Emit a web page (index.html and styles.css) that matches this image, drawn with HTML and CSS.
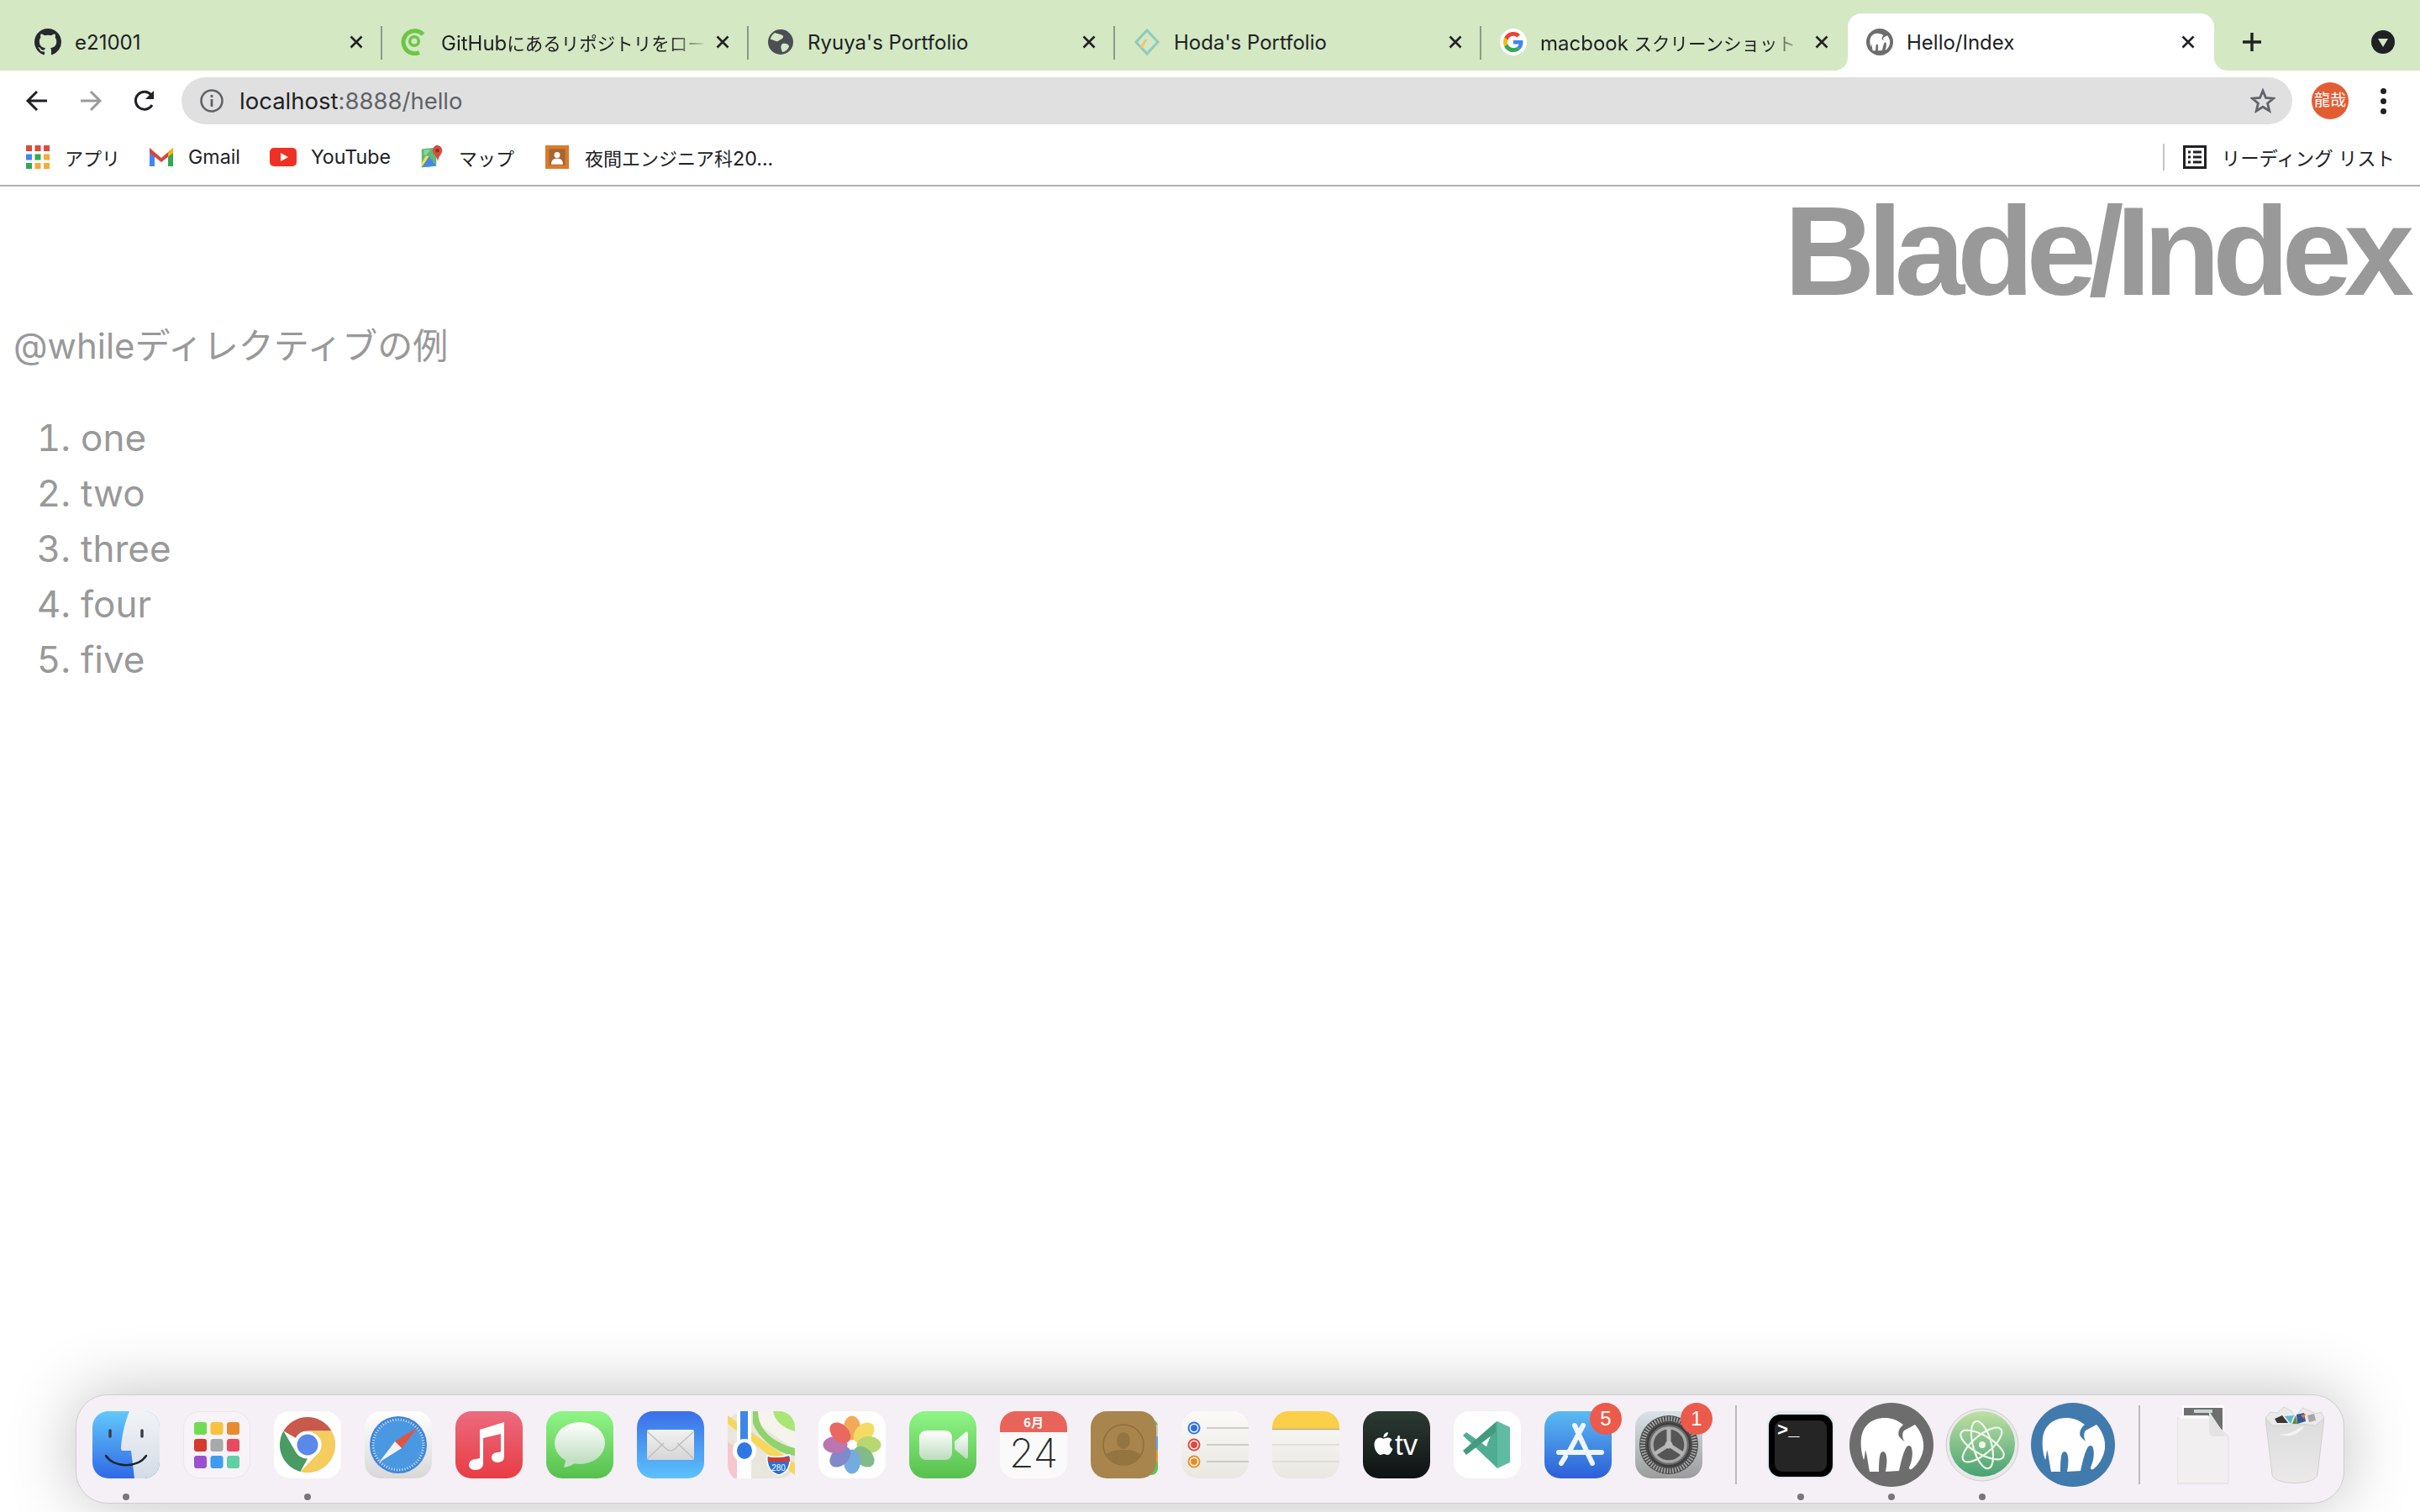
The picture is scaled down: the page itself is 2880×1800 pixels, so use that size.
FILE: index.html
```html
<!DOCTYPE html>
<html lang="ja">

<head>
    <meta charset="UTF-8">
    <title>Hello/Index</title>
    <link rel="stylesheet" href="styles.css">
</head>

<body>
    <!-- shared gradients and symbols -->
    <svg class="defs" aria-hidden="true">
        <defs>
            <linearGradient id="gFinder" x1="0" y1="0" x2="0" y2="1"><stop offset="0" stop-color="#62c8fb"/><stop offset="1" stop-color="#2f69e6"/></linearGradient>
            <linearGradient id="gFinder2" x1="0" y1="0" x2="0" y2="1"><stop offset="0" stop-color="#f3f3f5"/><stop offset="1" stop-color="#d2dce8"/></linearGradient>
            <linearGradient id="gSafari" x1="0" y1="0" x2="0" y2="1"><stop offset="0" stop-color="#fff"/><stop offset="1" stop-color="#d8d8d8"/></linearGradient>
            <linearGradient id="gMusic" x1="0" y1="0" x2="0" y2="1"><stop offset="0" stop-color="#ec6b7e"/><stop offset="1" stop-color="#e83c44"/></linearGradient>
            <linearGradient id="gGreen" x1="0" y1="0" x2="0" y2="1"><stop offset="0" stop-color="#8ff587"/><stop offset="1" stop-color="#57c04d"/></linearGradient>
            <linearGradient id="gBubble" x1="0" y1="0" x2="0" y2="1"><stop offset="0" stop-color="#fff"/><stop offset="1" stop-color="#bcdcbc"/></linearGradient>
            <linearGradient id="gMail" x1="0" y1="0" x2="0" y2="1"><stop offset="0" stop-color="#3a6fe8"/><stop offset="1" stop-color="#5cc2fb"/></linearGradient>
            <linearGradient id="gEnvelope" x1="0" y1="0" x2="0" y2="1"><stop offset="0" stop-color="#f2f2f2"/><stop offset="1" stop-color="#d6d6d6"/></linearGradient>
            <linearGradient id="gNotes" x1="0" y1="0" x2="0" y2="1"><stop offset="0" stop-color="#fbfaf7"/><stop offset="1" stop-color="#e9e7e2"/></linearGradient>
            <linearGradient id="gTv" x1="0" y1="0" x2="0" y2="1"><stop offset="0" stop-color="#2c3b34"/><stop offset="1" stop-color="#0e1212"/></linearGradient>
            <linearGradient id="gStore" x1="0" y1="0" x2="0" y2="1"><stop offset="0" stop-color="#5abbf3"/><stop offset="1" stop-color="#2c5fd8"/></linearGradient>
            <linearGradient id="gGear" x1="0" y1="0" x2="0" y2="1"><stop offset="0" stop-color="#d9e3e8"/><stop offset="1" stop-color="#9c9c9c"/></linearGradient>
            <linearGradient id="gAtom" x1="0" y1="0" x2="0" y2="1"><stop offset="0" stop-color="#bfe0a4"/><stop offset="1" stop-color="#47a272"/></linearGradient>
            <linearGradient id="gBin" x1="0" y1="0" x2="0" y2="1"><stop offset="0" stop-color="#dcdcdc"/><stop offset="1" stop-color="#ebe9ea"/></linearGradient>
            <symbol id="elephant" viewBox="0 0 100 100">
                <path d="M14 42C16 26 28 18 42 18C50 18 56 20 64 26C59 30 57 36 59 40C62 44 65 45 66 47C63 43 62 37 65 33L78 26C85 34 89 44 88 54C87 64 81 74 74 79C72 80 71 79 71 77C74 70 76 62 74 54C73 50 69 50 67 54C63 62 61 72 59 81L43 82C44 76 45 70 44 64C43 56 37 56 36 64C35 70 35 76 35 82L24 82C22 72 21 62 19 56C18 64 18 66 17 68C14 60 13 50 14 42Z"/>
            </symbol>
            <symbol id="close" viewBox="0 0 16 16">
                <path d="M1.5 1.5L14.5 14.5M14.5 1.5L1.5 14.5" fill="none" stroke="#202124" stroke-width="2.6"/>
            </symbol>
        </defs>
    </svg>

    <div class="page">
        <header class="browser">
            <div class="tabstrip">
                <div class="tab">
                    <svg class="favicon" viewBox="0 0 16 16"><path fill="#24292e" d="M8 0C3.58 0 0 3.58 0 8c0 3.54 2.29 6.53 5.47 7.59.4.07.55-.17.55-.38 0-.19-.01-.82-.01-1.49-2.01.37-2.53-.49-2.69-.94-.09-.23-.48-.94-.82-1.13-.28-.15-.68-.52-.01-.53.63-.01 1.08.58 1.23.82.72 1.21 1.87.87 2.33.66.07-.52.28-.87.51-1.07-1.78-.2-3.64-.89-3.64-3.95 0-.87.31-1.59.82-2.15-.08-.2-.36-1.02.08-2.12 0 0 .67-.21 2.2.82.64-.18 1.32-.27 2-.27.68 0 1.36.09 2 .27 1.53-1.04 2.2-.82 2.2-.82.44 1.1.16 1.92.08 2.12.51.56.82 1.27.82 2.15 0 3.07-1.87 3.75-3.65 3.95.29.25.54.73.54 1.48 0 1.07-.01 1.93-.01 2.2 0 .21.15.46.55.38A8.013 8.013 0 0016 8c0-4.42-3.58-8-8-8z"/></svg>
                    <span class="tab-title">e21001</span>
                    <svg class="tab-close"><use href="#close"/></svg>
                </div>
                <div class="tab">
                    <svg class="favicon" viewBox="0 0 32 32"><path d="M22 28.5A13.5 13.5 0 1 1 26.5 7" fill="none" stroke="#6cc644" stroke-width="5"/><circle cx="16" cy="15" r="7" fill="#6cc644"/><circle cx="16" cy="15" r="3.5" fill="#d3e8c3"/></svg>
                    <span class="tab-title faded">GitHub<span class="ja">にあるリポジトリをロー</span></span>
                    <svg class="tab-close"><use href="#close"/></svg>
                </div>
                <div class="tab">
                    <svg class="favicon" viewBox="0 0 32 32"><circle cx="16" cy="16" r="15" fill="#4a4f54"/><path d="M9 5C13 7 17 6 19 9C20 12 15 13 13 15C10 16 7 13 4 13C4 10 6 7 9 5ZM18 18C22 17 26 19 26 21C25 25 21 28 18 28C17 25 15 21 18 18Z" fill="#d3e8c3"/></svg>
                    <span class="tab-title">Ryuya's Portfolio</span>
                    <svg class="tab-close"><use href="#close"/></svg>
                </div>
                <div class="tab">
                    <svg class="favicon" viewBox="0 0 32 32"><path d="M16 2L29 16L16 30L3 16Z" fill="none" stroke="#8ecbbd" stroke-width="3"/><path d="M9 23L15 13" stroke="#f2c27a" stroke-width="3"/></svg>
                    <span class="tab-title">Hoda's Portfolio</span>
                    <svg class="tab-close"><use href="#close"/></svg>
                </div>
                <div class="tab">
                    <svg class="favicon" viewBox="0 0 64 64">
                        <circle cx="32" cy="32" r="32" fill="#fff"/>
                        <g transform="translate(8 8)">
                            <path fill="#EA4335" d="M24 9.5c3.54 0 6.71 1.22 9.21 3.6l6.85-6.85C35.9 2.38 30.47 0 24 0 14.62 0 6.51 5.38 2.56 13.22l7.98 6.19C12.43 13.72 17.74 9.5 24 9.5z"/>
                            <path fill="#4285F4" d="M46.98 24.55c0-1.57-.15-3.09-.38-4.55H24v9.02h12.94c-.58 2.96-2.26 5.48-4.78 7.18l7.73 6c4.51-4.18 7.09-10.36 7.09-17.65z"/>
                            <path fill="#FBBC05" d="M10.53 28.59c-.48-1.45-.76-2.99-.76-4.59s.27-3.14.76-4.59l-7.98-6.19C.92 16.46 0 20.12 0 24c0 3.88.92 7.54 2.56 10.78l7.97-6.19z"/>
                            <path fill="#34A853" d="M24 48c6.48 0 11.93-2.13 15.89-5.81l-7.73-6c-2.15 1.45-4.92 2.3-8.16 2.3-6.26 0-11.57-4.22-13.47-9.91l-7.98 6.19C6.51 42.62 14.62 48 24 48z"/>
                        </g>
                    </svg>
                    <span class="tab-title faded">macbook <span class="ja">スクリーンショット</span></span>
                    <svg class="tab-close"><use href="#close"/></svg>
                </div>
                <div class="tab active">
                    <svg class="favicon" viewBox="0 0 100 100"><circle cx="50" cy="50" r="50" fill="#6d6d6d"/><use href="#elephant" fill="#fff"/></svg>
                    <span class="tab-title">Hello/Index</span>
                    <svg class="tab-close"><use href="#close"/></svg>
                </div>
                <svg class="new-tab" viewBox="0 0 24 24"><path d="M12 1V23M1 12H23" stroke="#202124" stroke-width="3.4" fill="none"/></svg>
                <div class="tab-search">
                    <svg viewBox="0 0 28 28"><circle cx="14" cy="14" r="14" fill="#202124"/><path d="M8 10H20L14 20Z" fill="#d3e8c3"/></svg>
                </div>
            </div>

            <div class="toolbar">
                <svg class="nav-btn" viewBox="0 0 28 28"><path d="M26 14H4M14 3L3 14L14 25" fill="none" stroke="#202124" stroke-width="3"/></svg>
                <svg class="nav-btn" viewBox="0 0 28 28"><path d="M2 14H24M14 3L25 14L14 25" fill="none" stroke="#9a9a9a" stroke-width="3"/></svg>
                <svg class="nav-btn" viewBox="0 0 28 28"><path d="M23 19A10.5 10.5 0 1 1 22 7" fill="none" stroke="#202124" stroke-width="3"/><path d="M25 2V12H15Z" fill="#202124"/></svg>
                <div class="omnibox">
                    <svg class="info" viewBox="0 0 28 28"><circle cx="14" cy="14" r="12.5" fill="none" stroke="#5f6368" stroke-width="2.6"/><path d="M14 12V21M14 7V10" stroke="#5f6368" stroke-width="2.8"/></svg>
                    <span class="url"><span class="host">localhost</span>:8888/hello</span>
                    <svg class="star" viewBox="0 0 30 30"><path d="M15 3L18.5 11.5L27.5 12.2L20.6 18L22.8 27L15 22.2L7.2 27L9.4 18L2.5 12.2L11.5 11.5Z" fill="none" stroke="#5f6368" stroke-width="2.8"/></svg>
                </div>
                <div class="avatar">龍哉</div>
                <div class="menu"><i></i><i></i><i></i></div>
            </div>

            <div class="bookmarks">
                <div class="bookmark apps">
                    <svg class="bm-icon" viewBox="0 0 28 28">
                        <g fill="#dd4b39"><rect width="7" height="7"/><rect x="10.500" width="7" height="7"/><rect x="21" width="7" height="7"/></g>
                        <g><rect y="10.500" width="7" height="7" fill="#4285f4"/><rect x="10.500" y="10.500" width="7" height="7" fill="#34a853"/><rect x="21" y="10.500" width="7" height="7" fill="#f4a93c"/></g>
                        <g><rect y="21" width="7" height="7" fill="#34a853"/><rect x="10.500" y="21" width="7" height="7" fill="#f4a93c"/><rect x="21" y="21" width="7" height="7" fill="#f4a93c"/></g>
                    </svg>
                    <span class="ja">アプリ</span>
                </div>
                <div class="bookmark gmail">
                    <svg class="bm-icon" viewBox="0 0 28 28"><path d="M0 5V25H6V12Z" fill="#4285f4"/><path d="M28 5V25H22V12Z" fill="#34a853"/><path d="M0 3L14 15L28 3V9L14 20L0 9Z" fill="#d9453a"/><path d="M22 9L28 3V9L22 14Z" fill="#f6b704"/></svg>
                    <span>Gmail</span>
                </div>
                <div class="bookmark youtube">
                    <svg class="bm-icon wide" viewBox="0 0 32 28"><rect y="3" width="32" height="22" rx="5" fill="#ee3124"/><path d="M13 9L22 14L13 19Z" fill="#fff"/></svg>
                    <span>YouTube</span>
                </div>
                <div class="bookmark maps">
                    <svg class="bm-icon" viewBox="0 0 28 32"><path d="M0 5L20 3V28L0 30Z" fill="#5fb878"/><path d="M0 30L10 15L20 28Z" fill="#4a86e8"/><path d="M0 30L10 15L6 14L0 24Z" fill="#f4e04d"/><path d="M3 6H12L6 13H3Z" fill="#8fd0a5"/><path d="M21 0C25 0 28 3 28 7C28 12 23 14 22 22C21 14 15 12 15 7C15 3 18 0 21 0Z" fill="#d64b3f"/><circle cx="21.500" cy="7" r="2.500" fill="#8c2f26"/></svg>
                    <span class="ja">マップ</span>
                </div>
                <div class="bookmark night">
                    <svg class="bm-icon wide" viewBox="0 0 32 32"><rect width="32" height="32" fill="#d97b30"/><rect x="5" y="5" width="22" height="22" fill="#a9652e"/><circle cx="16" cy="13" r="4" fill="#fff"/><path d="M8 26C8 20 11 18 16 18C21 18 24 20 24 26Z" fill="#fff"/></svg>
                    <span><span class="ja">夜間エンジニア科</span>20...</span>
                </div>
                <div class="reading">
                    <svg class="bm-icon" viewBox="0 0 28 28"><rect x="1.500" y="1.500" width="25" height="25" fill="none" stroke="#202124" stroke-width="3"/><path d="M6 8H9M12 8H22M6 14H9M12 14H22M6 20H9M12 20H22" stroke="#202124" stroke-width="3"/></svg>
                    <span class="ja">リーディング リスト</span>
                </div>
            </div>
        </header>

        <main class="content">
            <h1>Blade/Index</h1>
            <h3>@whileディレクティブの例</h3>
            <ol>
                <li>one</li>
                <li>two</li>
                <li>three</li>
                <li>four</li>
                <li>five</li>
            </ol>
        </main>

        <footer class="dock">
            <!-- Finder -->
            <div class="app running">
                <svg class="icon" viewBox="0 0 80 80">
                    <rect width="80" height="80" rx="19" fill="url(#gFinder)"/>
                    <path d="M44 0H61A19 19 0 0 1 80 19V61A19 19 0 0 1 61 80H50L46 47H36C34 47 34 45 34 43C35 28 39 12 44 0Z" fill="url(#gFinder2)"/>
                    <path d="M21 23V30M59 23V30" stroke="#3a3f4a" stroke-width="3.500" stroke-linecap="round"/>
                    <path d="M16 53C26 68 54 68 64 53" fill="none" stroke="#20242c" stroke-width="2.500" stroke-linecap="round"/>
                </svg>
            </div>
            <!-- Launchpad -->
            <div class="app">
                <svg class="icon" viewBox="0 0 80 80">
                    <rect x=".5" y=".5" width="79" height="79" rx="19" fill="#f7f3f6" stroke="#ebe6ea"/>
                    <rect x="13" y="13" width="15" height="15" rx="3" fill="#6fdc52"/><rect x="32.500" y="13" width="15" height="15" rx="3" fill="#f7c33e"/><rect x="52" y="13" width="15" height="15" rx="3" fill="#e88b30"/>
                    <rect x="13" y="33" width="15" height="15" rx="3" fill="#d53a2d"/><rect x="32.500" y="33" width="15" height="15" rx="3" fill="#a6aaad"/><rect x="52" y="33" width="15" height="15" rx="3" fill="#e94a60"/>
                    <rect x="13" y="53" width="15" height="15" rx="3" fill="#9b50d2"/><rect x="32.500" y="53" width="15" height="15" rx="3" fill="#3f9bf2"/><rect x="52" y="53" width="15" height="15" rx="3" fill="#60cfa6"/>
                </svg>
            </div>
            <!-- Chrome -->
            <div class="app running">
                <svg class="icon" viewBox="0 0 80 80">
                    <rect width="80" height="80" rx="19" fill="#fff"/>
                    <path d="M40 7A33 33 0 0 1 68.600 23.500H40A16.500 16.500 0 0 0 25.700 31.700L11.400 23.500A33 33 0 0 1 40 7Z" fill="#c9594b"/>
                    <path d="M11.400 23.500L25.700 48.300A16.500 16.500 0 0 0 40 56.500L31.500 72A33 33 0 0 1 11.400 23.500Z" fill="#4a9a63"/>
                    <path d="M68.600 23.500A33 33 0 0 1 31.500 72L54.300 48.300A16.500 16.500 0 0 0 54.300 31.700L40 23.500Z" fill="#f5cd5f"/>
                    <circle cx="40" cy="40" r="16" fill="#fff"/>
                    <circle cx="40" cy="40" r="12.500" fill="#5b89e9"/>
                </svg>
            </div>
            <!-- Safari -->
            <div class="app">
                <svg class="icon" viewBox="0 0 80 80">
                    <rect width="80" height="80" rx="19" fill="url(#gSafari)"/>
                    <circle cx="40" cy="40" r="34" fill="#3f86d8"/>
                    <circle cx="40" cy="40" r="30" fill="#4a97e2" stroke="#dcebf8" stroke-width="3" stroke-dasharray="1 2.200"/>
                    <path d="M63 19L36 36L44 44Z" fill="#e5533f"/>
                    <path d="M17 61L36 36L44 44Z" fill="#f2f2f2"/>
                </svg>
            </div>
            <!-- Music -->
            <div class="app">
                <svg class="icon" viewBox="0 0 80 80">
                    <rect width="80" height="80" rx="19" fill="url(#gMusic)"/>
                    <path d="M29 22L58 13V54C58 59 54 61 50 61C46 61 43 58 43 55C43 51 47 49 51 49L54 48V27L33 32V63C33 67 29 70 24 70C19 70 16 67 16 64C16 60 20 57 24 57L29 56Z" fill="#fff"/>
                </svg>
            </div>
            <!-- Messages -->
            <div class="app">
                <svg class="icon" viewBox="0 0 80 80">
                    <rect width="80" height="80" rx="19" fill="url(#gGreen)"/>
                    <ellipse cx="40" cy="38" rx="30" ry="25" fill="url(#gBubble)"/>
                    <path d="M24 56L21 67C27 66 32 64 35 61Z" fill="#c4e0c2"/>
                </svg>
            </div>
            <!-- Mail -->
            <div class="app">
                <svg class="icon" viewBox="0 0 80 80">
                    <rect width="80" height="80" rx="19" fill="url(#gMail)"/>
                    <rect x="12" y="22" width="56" height="36" rx="2" fill="url(#gEnvelope)"/>
                    <path d="M12 24L34 44C38 48 42 48 46 44L68 24M12 57L32 38M68 57L48 38" fill="none" stroke="#bdbdbd" stroke-width="1.200"/>
                </svg>
            </div>
            <!-- Maps -->
            <div class="app">
                <svg class="icon" viewBox="0 0 80 80">
                    <rect width="80" height="80" rx="19" fill="#e9e6dc"/>
                    <path d="M36 0H61A19 19 0 0 1 80 19V46L40 18C38 12 36 6 36 0Z" fill="#f5f3ec"/>
                    <path d="M54 0H61A19 19 0 0 1 80 19V24C66 20 56 12 54 0Z" fill="#a9e676"/>
                    <path d="M30 0H36C36 20 50 36 80 44V53C56 50 36 30 30 14Z" fill="#8fd36b"/>
                    <path d="M0 15L80 76V62L0 5Z" fill="#f6d75c"/>
                    <path d="M0 36L11 44V80H8C3 77 0 70 0 61Z" fill="#f6c6cf"/>
                    <rect x="11" y="30" width="17" height="50" fill="#fff"/>
                    <rect x="15" y="0" width="9" height="36" fill="#3b86e8"/>
                    <rect x="11" y="0" width="4" height="36" fill="#fff"/>
                    <rect x="24" y="0" width="4" height="36" fill="#fff"/>
                    <circle cx="20" cy="47" r="14" fill="#fff"/>
                    <ellipse cx="20" cy="47" rx="9" ry="10" fill="#2f78e4"/>
                    <path d="M47 53C54 55 64 55 74 52C75 62 73 73 61 76C49 73 46 62 47 53Z" fill="#2a6fd6" stroke="#fff" stroke-width="1.500"/>
                    <rect x="48" y="55" width="26" height="5" fill="#d8392e"/>
                    <text class="shield-text" x="60.500" y="71">280</text>
                </svg>
            </div>
            <!-- Photos -->
            <div class="app">
                <svg class="icon" viewBox="0 0 80 80">
                    <rect width="80" height="80" rx="19" fill="#fff"/>
                    <g opacity=".78">
                        <ellipse cx="40" cy="20" rx="10" ry="14.500" fill="#f0912c"/>
                        <ellipse cx="40" cy="20" rx="10" ry="14.500" fill="#f2d23c" transform="rotate(45 40 40)"/>
                        <ellipse cx="40" cy="20" rx="10" ry="14.500" fill="#a6cc4a" transform="rotate(90 40 40)"/>
                        <ellipse cx="40" cy="20" rx="10" ry="14.500" fill="#5fa868" transform="rotate(135 40 40)"/>
                        <ellipse cx="40" cy="20" rx="10" ry="14.500" fill="#4f95d8" transform="rotate(180 40 40)"/>
                        <ellipse cx="40" cy="20" rx="10" ry="14.500" fill="#5d68bb" transform="rotate(225 40 40)"/>
                        <ellipse cx="40" cy="20" rx="10" ry="14.500" fill="#a8509c" transform="rotate(270 40 40)"/>
                        <ellipse cx="40" cy="20" rx="10" ry="14.500" fill="#e33f34" transform="rotate(315 40 40)"/>
                    </g>
                </svg>
            </div>
            <!-- FaceTime -->
            <div class="app">
                <svg class="icon" viewBox="0 0 80 80">
                    <rect width="80" height="80" rx="19" fill="url(#gGreen)"/>
                    <rect x="12" y="23" width="39" height="35" rx="8" fill="url(#gBubble)"/>
                    <path d="M54 36L67 25C69 24 70 25 70 27V54C70 56 69 57 67 56L54 45Z" fill="url(#gBubble)"/>
                </svg>
            </div>
            <!-- Calendar -->
            <div class="app">
                <svg class="icon" viewBox="0 0 80 80">
                    <rect width="80" height="80" rx="19" fill="#fafafa"/>
                    <path d="M0 25V19A19 19 0 0 1 19 0H61A19 19 0 0 1 80 19V25Z" fill="#e8645b"/>
                    <text class="cal-month" x="40" y="19">6月</text>
                    <text class="cal-day" x="40" y="67">24</text>
                </svg>
            </div>
            <!-- Contacts -->
            <div class="app">
                <svg class="icon" viewBox="0 0 80 80">
                    <rect x="60" y="10" width="20" height="66" rx="8" fill="#5cc45c"/>
                    <rect x="66" y="16" width="14" height="14" fill="#c9c9c4"/>
                    <rect x="66" y="30" width="14" height="16" fill="#56a9ee"/>
                    <rect x="66" y="46" width="14" height="14" fill="#e99a33"/>
                    <rect width="78" height="80" rx="19" fill="#a8854d"/>
                    <circle cx="39" cy="40" r="24" fill="none" stroke="#8f6f3d" stroke-width="1.600"/>
                    <ellipse cx="39" cy="35" rx="8" ry="10" fill="#94743f"/>
                    <path d="M18 52C23 47 31 46 39 46C47 46 55 47 60 52C55 60 47 64 39 64C31 64 23 60 18 52Z" fill="#94743f"/>
                </svg>
            </div>
            <!-- Reminders -->
            <div class="app">
                <svg class="icon" viewBox="0 0 80 80">
                    <rect width="80" height="80" rx="19" fill="url(#gNotes)"/>
                    <circle cx="15" cy="20" r="6.500" fill="#fff" stroke="#2f72e8" stroke-width="2"/><circle cx="15" cy="20" r="4" fill="#2f72e8"/>
                    <circle cx="15" cy="40" r="6.500" fill="#fff" stroke="#e2463c" stroke-width="2"/><circle cx="15" cy="40" r="4" fill="#e2463c"/>
                    <circle cx="15" cy="60" r="6.500" fill="#fff" stroke="#e78c25" stroke-width="2"/><circle cx="15" cy="60" r="4" fill="#e78c25"/>
                    <path d="M30 20H80M30 40H80M30 60H80" stroke="#c2c0c0" stroke-width="1.500"/>
                </svg>
            </div>
            <!-- Notes -->
            <div class="app">
                <svg class="icon" viewBox="0 0 80 80">
                    <rect width="80" height="80" rx="19" fill="url(#gNotes)"/>
                    <path d="M0 21V19A19 19 0 0 1 19 0H61A19 19 0 0 1 80 19V21Z" fill="#fbcf47"/>
                    <path d="M0 21.500H80" stroke="#b5b0a0" stroke-width="1.500"/>
                    <path d="M0 40H80M0 60H80" stroke="#dcd8dc" stroke-width="1.500"/>
                </svg>
            </div>
            <!-- TV -->
            <div class="app">
                <svg class="icon" viewBox="0 0 80 80">
                    <rect width="80" height="80" rx="19" fill="url(#gTv)"/>
                    <svg x="11" y="24" width="27" height="29" viewBox="0 0 24 24"><path fill="#fff" d="M12.152 6.896c-.948 0-2.415-1.078-3.96-1.04-2.04.027-3.91 1.183-4.961 3.014-2.117 3.675-.546 9.103 1.519 12.09 1.013 1.454 2.208 3.09 3.792 3.039 1.52-.065 2.09-.987 3.935-.987 1.831 0 2.35.987 3.96.948 1.637-.026 2.676-1.48 3.676-2.948 1.156-1.688 1.636-3.325 1.662-3.415-.039-.013-3.182-1.221-3.22-4.857-.026-3.04 2.48-4.494 2.597-4.559-1.429-2.09-3.623-2.324-4.39-2.376-2-.156-3.675 1.09-4.61 1.09zM15.53 3.83c.843-1.012 1.4-2.427 1.245-3.83-1.207.052-2.662.805-3.532 1.818-.78.896-1.454 2.338-1.273 3.714 1.338.104 2.715-.688 3.559-1.701"/></svg>
                    <text class="tv-text" x="38" y="52">tv</text>
                </svg>
            </div>
            <!-- VS Code -->
            <div class="app">
                <svg class="icon" viewBox="0 0 80 80">
                    <rect width="80" height="80" rx="19" fill="#fff"/>
                    <path d="M52 12L67 19V61L52 68Z" fill="#5fbca3"/>
                    <path d="M52 12V68L11 29L15 25L39 42L50 13Z" fill="#4fae92"/>
                    <path d="M50 13L11 47L15 52L50 25Z" fill="#449a80"/>
                </svg>
            </div>
            <!-- App Store -->
            <div class="app">
                <svg class="icon" viewBox="0 0 80 80">
                    <rect width="80" height="80" rx="19" fill="url(#gStore)"/>
                    <path d="M17 49H68M20 62L25 54M30 47L46 17M36 17L57 62" fill="none" stroke="#eef5fd" stroke-width="6" stroke-linecap="round"/>
                </svg>
                <span class="badge">5</span>
            </div>
            <!-- System Preferences -->
            <div class="app">
                <svg class="icon" viewBox="0 0 80 80">
                    <rect width="80" height="80" rx="19" fill="url(#gGear)"/>
                    <circle cx="40" cy="40" r="35" fill="#4a4a4a"/>
                    <circle cx="40" cy="40" r="31" fill="none" stroke="#b0b0b0" stroke-width="6" stroke-dasharray="1.500 1.800"/>
                    <circle cx="40" cy="40" r="25" fill="#6a6a6a" stroke="#3d3d3d" stroke-width="2"/>
                    <circle cx="40" cy="40" r="20" fill="#555" stroke="#a8a8a8" stroke-width="3.500"/>
                    <path d="M40 40V20M40 40L23 51M40 40L57 51" stroke="#b4b4b4" stroke-width="5"/>
                    <circle cx="40" cy="40" r="4.500" fill="#bdbdbd"/>
                </svg>
                <span class="badge">1</span>
            </div>

            <div class="divider first"></div>

            <!-- Terminal -->
            <div class="app running terminal">
                <svg class="icon" viewBox="0 0 80 80">
                    <rect width="80" height="80" rx="17" fill="#dfe9ee"/>
                    <rect x="2" y="4" width="76" height="74" rx="14" fill="#000"/>
                    <rect x="9" y="11" width="62" height="61" rx="9" fill="#252525"/>
                    <text class="term-text" x="12" y="29">&gt;_</text>
                </svg>
            </div>
            <!-- MAMP -->
            <div class="app running mamp">
                <svg class="icon" viewBox="0 0 100 100"><circle cx="50" cy="50" r="50" fill="#6d6d6d"/><use href="#elephant" fill="#fff"/></svg>
            </div>
            <!-- Atom -->
            <div class="app running atom">
                <svg class="icon" viewBox="0 0 88 88">
                    <circle cx="44" cy="44" r="43" fill="#e9e9e9" stroke="#cfcfcf"/>
                    <circle cx="44" cy="43" r="39" fill="url(#gAtom)"/>
                    <g fill="none" stroke="#eef7ea" stroke-width="2.200">
                        <ellipse cx="44" cy="44" rx="29" ry="11" transform="rotate(30 44 44)"/>
                        <ellipse cx="44" cy="44" rx="29" ry="11" transform="rotate(-40 44 44)"/>
                        <ellipse cx="44" cy="44" rx="29" ry="11" transform="rotate(75 44 44)"/>
                    </g>
                    <circle cx="44" cy="44" r="4" fill="#eef7ea"/>
                </svg>
            </div>
            <!-- MAMP Pro -->
            <div class="app mamp-pro">
                <svg class="icon" viewBox="0 0 100 100"><circle cx="50" cy="50" r="50" fill="#417aad"/><use href="#elephant" fill="#fff"/></svg>
            </div>

            <div class="divider second"></div>

            <!-- Screenshot file -->
            <div class="app doc">
                <svg class="icon" viewBox="0 0 62 94">
                    <rect x="6" y="0" width="50" height="30" fill="#fff"/>
                    <rect x="8" y="3" width="46" height="27" fill="#6f6f6f"/>
                    <rect x="20" y="5" width="22" height="4" fill="#c9d6d6"/>
                    <path d="M0 15H38L61 37V93H0Z" fill="#f1efef" stroke="#dedcdc"/>
                    <path d="M3 12H37L41 16H3Z" fill="#fbfafa"/>
                    <path d="M38 7L58 37H44C40 37 38 34 38 31Z" fill="#e4e3e3"/>
                </svg>
            </div>
            <!-- Trash -->
            <div class="app trash">
                <svg class="icon" viewBox="0 0 70 94">
                    <path d="M0 15L8 82C9 96 61 96 62 82L70 15Z" fill="url(#gBin)" stroke="#d0cecf"/>
                    <path d="M16 34C26 36 36 30 46 24C42 34 28 40 16 34Z" fill="#f4f3f3"/>
                    <path d="M0 15L6 8L14 9L22 2L30 6L36 14L44 3L52 6L60 10L66 8L70 15L60 24L40 22L22 24L8 24Z" fill="#ebeaea" stroke="#c4c2c3" stroke-width=".6"/>
                    <path d="M11 16L20 12L27 21L14 21Z" fill="#3c3636"/>
                    <path d="M23 13L34 12L30 22Z" fill="#58b9d6"/>
                    <path d="M37 11L46 9L48 19L38 22Z" fill="#35569a"/>
                    <path d="M42 12L48 10L46 16Z" fill="#d97b30"/>
                    <path d="M32 22L36 12L38 22Z" fill="#5b8f3c"/>
                    <path d="M50 12L58 10L60 18L52 20Z" fill="#a8a6a6"/>
                </svg>
            </div>
        </footer>
    </div>
</body>

</html>
```

FILE: styles.css
```css
* {
    box-sizing: border-box;
}

html,
body {
    margin: 0;
    padding: 0;
}

body {
    font-family: Inter, "Noto Sans CJK JP", sans-serif;
    background-color: #fff;
}

.defs {
    display: block;
    width: 0;
    height: 0;
}

.page {
    display: flex;
    flex-direction: column;
    height: 1800px;
    overflow: hidden;
}

/* browser chrome */
.tabstrip {
    display: flex;
    align-items: flex-end;
    height: 84px;
    padding-left: 19px;
    background-color: #d3e8c3;
}

.tab {
    position: relative;
    display: flex;
    align-items: center;
    width: 436px;
    height: 68px;
    padding: 0 23px 0 22px;
    font-size: 24px;
    color: #202124;
}

.tab::after {
    content: "";
    position: absolute;
    right: 0;
    top: 15px;
    width: 2px;
    height: 40px;
    background-color: #8b9a88;
}

.tab:nth-child(5)::after {
    display: none;
}

.tab.active {
    background-color: #fff;
    border-radius: 16px 16px 0 0;
}

.tab.active::before,
.tab.active::after {
    content: "";
    position: absolute;
    top: auto;
    bottom: 0;
    width: 16px;
    height: 16px;
}

.tab.active::before {
    left: -16px;
    background: radial-gradient(circle at 0 0, transparent 15.5px, #fff 16.5px);
}

.tab.active::after {
    right: -16px;
    background: radial-gradient(circle at 100% 0, transparent 15.5px, #fff 16.5px);
}

.favicon {
    flex: none;
    width: 32px;
    height: 32px;
    margin-right: 16px;
}

.tab-title {
    flex: 1;
    min-width: 0;
    overflow: hidden;
    white-space: nowrap;
}

.tab-title.faded {
    mask-image: linear-gradient(to right, #000 85%, transparent 100%);
}

.ja {
    font-size: 21.5px;
}

.tab-close {
    flex: none;
    width: 16px;
    height: 16px;
    margin-left: 10px;
}

.new-tab {
    flex: none;
    width: 24px;
    height: 24px;
    margin: 0 0 22px 33px;
}

.tab-search {
    display: flex;
    margin: 0 0 20px 130px;
}

.tab-search svg {
    width: 28px;
    height: 28px;
}

.toolbar {
    display: flex;
    align-items: center;
    height: 72px;
    padding: 8px 40px 8px 30px;
}

.nav-btn {
    flex: none;
    width: 28px;
    height: 28px;
    margin-right: 36px;
}

.nav-btn:nth-child(3) {
    margin-right: 30px;
}

.omnibox {
    display: flex;
    align-items: center;
    flex: 1;
    height: 56px;
    padding: 0 20px 0 22px;
    border-radius: 28px;
    background-color: #e0e0e0;
}

.info {
    width: 28px;
    height: 28px;
    margin-right: 19px;
}

.url {
    flex: 1;
    font-size: 27.5px;
    color: #5f6368;
}

.host {
    color: #202124;
}

.star {
    width: 30px;
    height: 30px;
}

.avatar {
    flex: none;
    width: 44px;
    height: 44px;
    margin-left: 23px;
    border-radius: 50%;
    background-color: #e35d33;
    color: #fff;
    font-size: 19px;
    line-height: 44px;
    text-align: center;
}

.menu {
    display: flex;
    flex-direction: column;
    gap: 5px;
    margin-left: 38px;
}

.menu i {
    display: block;
    width: 7px;
    height: 7px;
    border-radius: 50%;
    background-color: #202124;
}

.bookmarks {
    display: flex;
    align-items: center;
    height: 66px;
    padding: 0 30px 2px 31px;
    border-bottom: 2px solid #b0b0b0;
    font-size: 23.200px;
    color: #202124;
}

.bookmarks .ja {
    font-size: 22px;
}

.bookmark {
    display: flex;
    align-items: center;
    margin-right: 35px;
}

.bm-icon {
    flex: none;
    width: 28px;
    height: 28px;
    margin-right: 18px;
}

.bm-icon.wide {
    width: 32px;
    margin-right: 17px;
}

.reading {
    display: flex;
    align-items: center;
    margin-left: auto;
    padding-left: 22px;
    border-left: 2px solid #c4c4c4;
}

.reading .ja {
    font-size: 22.400px;
}

/* page content */
.content {
    flex: 1;
    padding: 0 8px 0 16px;
    color: #999;
    font-family: Inter, "Noto Sans CJK JP", sans-serif;
    font-weight: 400;
}

h1 {
    margin: 0;
    padding-right: 8px;
    height: 150px;
    font-family: "Liberation Sans", Arial, sans-serif;
    font-size: 150px;
    line-height: 154px;
    font-weight: 700;
    letter-spacing: -9.200px;
    text-align: right;
}

h3 {
    margin: 8px 0 0 0;
    font-size: 42px;
    line-height: 64px;
    font-weight: 400;
}

ol {
    margin: 44px 0 0 0;
    padding-left: 80px;
    font-size: 44px;
    line-height: 66px;
}

/* dock */
.dock {
    display: flex;
    align-items: center;
    flex: none;
    width: 2700px;
    height: 130px;
    margin: 0 0 10px 90px;
    padding: 0 0 10px 19px;
    border: 1px solid #cfcdcf;
    border-radius: 38px;
    background-color: #f5f0f5;
    box-shadow: 0 0 80px rgba(0, 0, 0, 0.25);
}

.app {
    position: relative;
    flex: none;
    width: 80px;
    margin-right: 28px;
}

.icon {
    display: block;
    width: 100%;
}

.app.running::after {
    content: "";
    position: absolute;
    left: 50%;
    bottom: -26px;
    width: 8px;
    height: 8px;
    margin-left: -4px;
    border-radius: 50%;
    background-color: #7a757a;
}

.badge {
    position: absolute;
    top: -10px;
    right: -12px;
    width: 38px;
    height: 38px;
    border-radius: 50%;
    background-color: #ec5a4c;
    color: #fff;
    font-family: "Liberation Sans", Arial, sans-serif;
    font-size: 24px;
    line-height: 38px;
    text-align: center;
}

.divider {
    flex: none;
    width: 2px;
    height: 94px;
    background-color: #bdb9bd;
}

.divider.first {
    margin: 0 36px 0 11px;
}

.divider.second {
    margin: 0 44px 0 28px;
}

.terminal {
    margin-right: 18px;
}

.mamp {
    width: 100px;
    margin-right: 14px;
}

.mamp.app.running::after {
    bottom: -16px;
}

.atom {
    width: 88px;
    margin-right: 14px;
}

.atom.app.running::after {
    bottom: -22px;
}

.mamp-pro {
    width: 100px;
    margin-right: 0;
}

.doc {
    width: 62px;
    margin-right: 43px;
}

.trash {
    width: 70px;
    margin-right: 0;
}

/* text inside dock icons */
.shield-text {
    fill: #fff;
    font-family: "Liberation Sans", Arial, sans-serif;
    font-size: 10px;
    text-anchor: middle;
}

.cal-month {
    fill: #fff;
    font-family: "Noto Sans CJK JP", sans-serif;
    font-size: 15px;
    font-weight: 700;
    text-anchor: middle;
}

.cal-day {
    fill: #2a2a2a;
    font-family: Inter, sans-serif;
    font-size: 48px;
    font-weight: 200;
    text-anchor: middle;
}

.tv-text {
    fill: #fff;
    font-family: "Liberation Sans", Arial, sans-serif;
    font-size: 35px;
}

.term-text {
    fill: #fff;
    font-family: "Liberation Mono", monospace;
    font-size: 22px;
    font-weight: 700;
}
```
